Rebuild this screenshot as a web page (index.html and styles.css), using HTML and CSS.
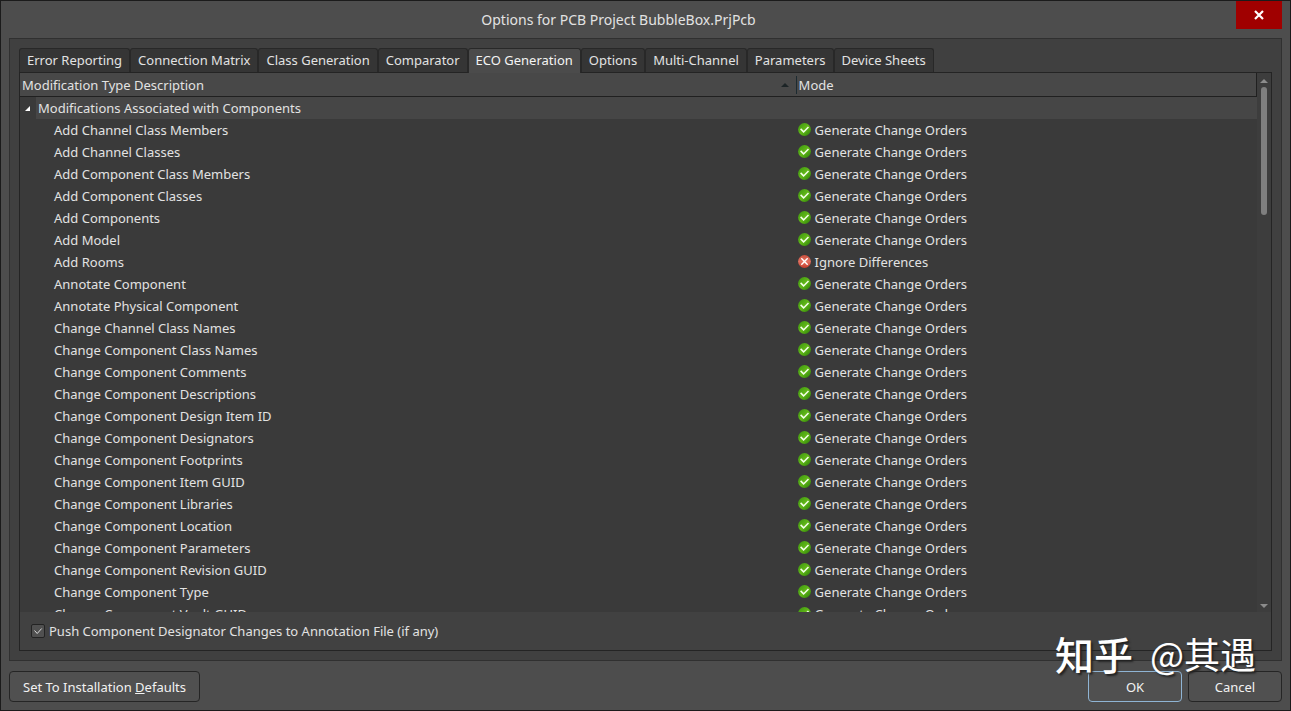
FILE: index.html
```html
<!DOCTYPE html>
<html lang="en">
<head>
<meta charset="utf-8">
<title>Options for PCB Project BubbleBox.PrjPcb</title>
<link rel="stylesheet" href="styles.css">
</head>
<body>
<svg width="0" height="0" class="defs" aria-hidden="true">
  <defs>
    <linearGradient id="green" x1="0" y1="0" x2="1" y2="1"><stop offset="0" stop-color="#3a9410"/><stop offset=".5" stop-color="#62b818"/><stop offset="1" stop-color="#2a8006"/></linearGradient>
    <linearGradient id="red" x1="0" y1="0" x2="0" y2="1"><stop offset="0" stop-color="#c9503f"/><stop offset=".5" stop-color="#e2705f"/><stop offset="1" stop-color="#c43c2c"/></linearGradient>
    <symbol id="ok" viewBox="0 0 13 13"><circle cx="6.5" cy="6.5" r="6.4" fill="url(#green)"/><path d="M2.6 5.9l3 3 4.9-5" fill="none" stroke="#f4ffe8" stroke-width="1.5"/></symbol>
    <symbol id="no" viewBox="0 0 13 13"><circle cx="6.5" cy="6.5" r="6.4" fill="url(#red)"/><path d="M3.3 3.3l6.4 6.4M9.7 3.3l-6.4 6.4" fill="none" stroke="#fff" stroke-width="1.4"/></symbol>
  </defs>
</svg>
<div class="dialog">
  <header class="titlebar">
    <h1 class="title">Options for PCB Project BubbleBox.PrjPcb</h1>
    <button class="close" type="button" aria-label="Close"><svg width="10" height="10" viewBox="0 0 10 10"><path d="M1 1l8 8M9 1l-8 8" stroke="#fff" stroke-width="2.2" fill="none"/></svg></button>
  </header>
  <main class="panel">
    <nav class="tabs" role="tablist">
      <button class="tab" type="button" role="tab">Error Reporting</button>
      <button class="tab" type="button" role="tab">Connection Matrix</button>
      <button class="tab" type="button" role="tab">Class Generation</button>
      <button class="tab" type="button" role="tab">Comparator</button>
      <button class="tab active" type="button" role="tab" aria-selected="true">ECO Generation</button>
      <button class="tab" type="button" role="tab">Options</button>
      <button class="tab" type="button" role="tab">Multi-Channel</button>
      <button class="tab" type="button" role="tab">Parameters</button>
      <button class="tab" type="button" role="tab">Device Sheets</button>
    </nav>
    <section class="page">
      <div class="grid">
        <div class="viewport">
          <table class="list">
            <colgroup><col class="col-type"><col></colgroup>
            <thead>
              <tr>
                <th><span class="head">Modification Type Description<svg class="sort" width="8" height="4" viewBox="0 0 8 4"><path d="M0 4l4-4 4 4z" fill="#1c2426"/></svg></span></th>
                <th><span class="head divided">Mode</span></th>
              </tr>
            </thead>
            <tbody id="rows">
              <tr class="group"><td colspan="2"><span class="group-row"><svg class="twisty" width="16" height="22" viewBox="0 0 16 22"><path d="M5 14h5V9z" fill="#fff"/></svg><span class="group-name">Modifications Associated with Components</span></span></td></tr>
            </tbody>
          </table>
        </div>
        <div class="scrollbar" aria-hidden="true">
          <svg width="8" height="4" viewBox="0 0 8 4"><path d="M0 4l4-4 4 4z" fill="#8c8c8c"/></svg>
          <div class="track"><div class="thumb"></div></div>
          <svg width="8" height="4" viewBox="0 0 8 4"><path d="M0 0l4 4 4-4z" fill="#8c8c8c"/></svg>
        </div>
      </div>
      <div class="push">
        <input class="check" type="checkbox" id="push" checked>
        <label for="push">Push Component Designator Changes to Annotation File (if any)</label>
      </div>
    </section>
  </main>
  <footer class="actions">
    <button class="btn defaults" type="button">Set To Installation <u>D</u>efaults</button>
    <button class="btn primary" type="button">OK</button>
    <button class="btn" type="button">Cancel</button>
  </footer>
  <div class="watermark"><b class="brand">知乎</b><span>@其遇</span></div>
</div>
<script src="rows.js"></script>
</body>
</html>
```
FILE: styles.css
```css
* { box-sizing: border-box; }
html, body { height: 100%; }
body { margin: 0; background: #4d4d4d; color: #e2e2e2; font: 13px/22px "Noto Sans", "Noto Sans CJK SC", sans-serif; }
button { font: inherit; color: inherit; margin: 0; }
.defs { position: absolute; }
.dialog { position: relative; display: flex; flex-direction: column; height: 100vh; padding: 0 8px 8px; border: 1px solid #1b1b1b; background: #4d4d4d; overflow: hidden; }
.titlebar { position: relative; display: flex; justify-content: center; height: 37px; flex: none; padding-right: 54px; }
.title { margin: 0; font-size: 14px; line-height: 37px; font-weight: 400; }
.close { position: absolute; top: 0; right: 0; width: 46px; height: 28px; padding: 0; border: 0; background: #a00000; display: flex; align-items: center; justify-content: center; }
.panel { flex: 1; min-height: 0; display: flex; flex-direction: column; padding: 9px; border: 1px solid #303030; background: #404040; }
.tabs { display: flex; flex: none; height: 24px; }
.tab { padding: 0 7px 2px; border: 1px solid #282828; border-bottom: 0; border-radius: 3px 3px 0 0; background: #353535; white-space: nowrap; }
.tab.active { position: relative; background: #4b4b4b; margin-bottom: -1px; padding-bottom: 3px; color: #f4f4f4; }
.page { flex: 1; min-height: 0; display: flex; flex-direction: column; border: 1px solid #242424; background: #414141; }
.grid { flex: 1; min-height: 0; display: flex; background: #3a3a3a; }
.viewport { flex: 1; min-width: 0; overflow: hidden; }
.list { width: 100%; border-collapse: separate; border-spacing: 0; table-layout: fixed; }
.col-type { width: 62.7%; }
.list th, .list td { padding: 0; text-align: left; font-weight: 400; white-space: nowrap; }
.list th { height: 24px; background: #484848; border-bottom: 1px solid #202020; }
.list th:last-child { border-right: 1px solid #202020; }
.head { display: flex; align-items: center; justify-content: space-between; padding: 0 7px 0 2px; line-height: 18px; }
.divided { border-left: 1px solid #1c2a30; }
.list td { height: 22px; line-height: 22px; }
.list .name { padding-left: 34px; }
.group-row { display: flex; }
.twisty { flex: none; }
.group-name { flex: 1; padding-left: 2px; background: #464646; }
.mode { display: flex; align-items: center; gap: 4px; padding-left: 2px; }
.mode svg { flex: none; margin-bottom: 2px; }
.scrollbar { flex: none; width: 14px; display: flex; flex-direction: column; align-items: center; gap: 4px; padding: 6px 0 4px; background: #3d3d3d; }
.scrollbar svg { flex: none; }
.track { flex: 1; width: 6px; }
.thumb { height: 25%; border-radius: 3px; background: #7f7f7f; }
.push { flex: none; display: flex; align-items: center; gap: 4px; height: 38px; padding: 0 11px; }
.check { appearance: none; width: 14px; height: 14px; margin: 0; border: 1px solid #232323; border-radius: 2px; background: #505050 url("data:image/svg+xml,%3Csvg xmlns='http://www.w3.org/2000/svg' viewBox='0 0 12 12'%3E%3Cpath d='M2.5 5.5l2.7 3 4.5-5' fill='none' stroke='%23ddd' stroke-width='1'/%3E%3C/svg%3E"); }
.actions { flex: none; display: flex; gap: 6px; padding-top: 10px; }
.btn { width: 94px; height: 31px; padding: 0; border: 1px solid #252525; border-radius: 4px; background: #505050; color: #f2f2f2; }
.defaults { width: auto; padding: 0 13px; margin-right: auto; }
.primary { border-color: #8fb4d4; }
.watermark { position: absolute; right: 34px; bottom: 31px; display: flex; gap: 17px; font: 36px/52px "Noto Sans CJK SC", sans-serif; color: #fff; text-shadow: 2px 2px 2px #222; pointer-events: none; }
.brand { font-size: 39px; font-weight: 500; }
```
FILE: rows.js
```js
const names = [
  "Add Channel Class Members", "Add Channel Classes", "Add Component Class Members",
  "Add Component Classes", "Add Components", "Add Model", "Add Rooms",
  "Annotate Component", "Annotate Physical Component", "Change Channel Class Names",
  "Change Component Class Names", "Change Component Comments",
  "Change Component Descriptions", "Change Component Design Item ID",
  "Change Component Designators", "Change Component Footprints",
  "Change Component Item GUID", "Change Component Libraries",
  "Change Component Location", "Change Component Parameters",
  "Change Component Revision GUID", "Change Component Type", "Change Component Vault GUID"
];
const ignored = new Set(["Add Rooms"]);
document.getElementById("rows").insertAdjacentHTML("beforeend", names.map(name => {
  const off = ignored.has(name);
  return `<tr><td class="name">${name}</td><td><span class="mode"><svg width="13" height="13"><use href="#${off ? "no" : "ok"}"/></svg>${off ? "Ignore Differences" : "Generate Change Orders"}</span></td></tr>`;
}).join(""));
```
